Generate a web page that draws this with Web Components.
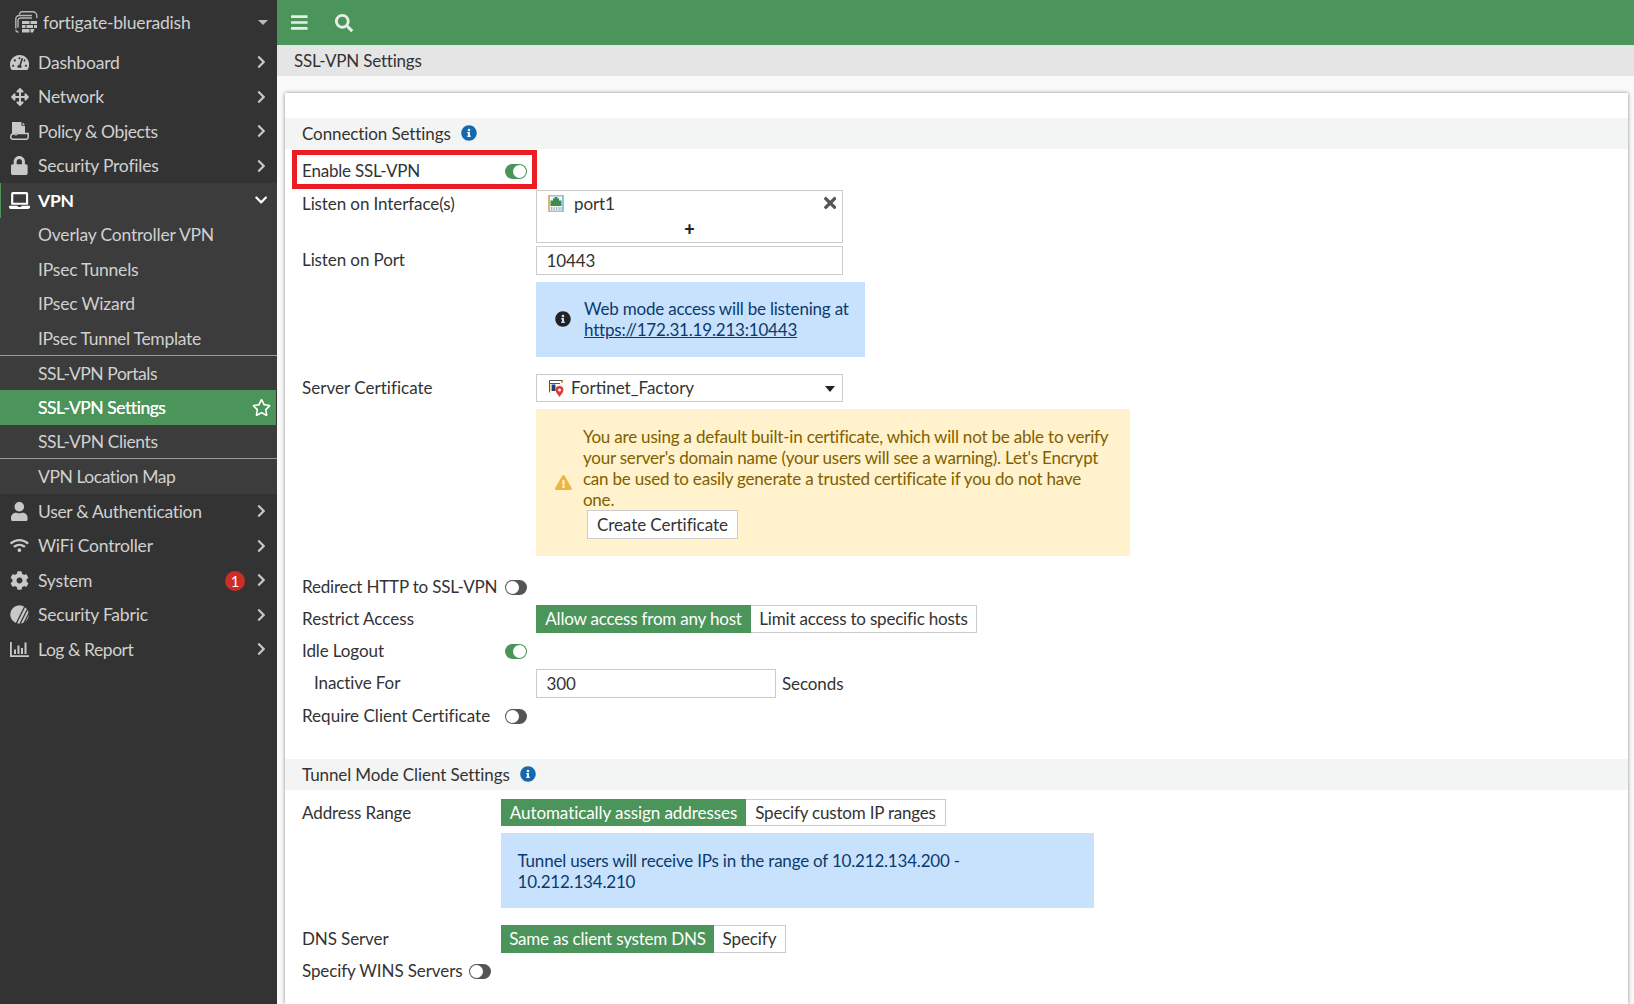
<!DOCTYPE html>
<html lang="en"><head><meta charset="utf-8"><title>SSL-VPN Settings</title>
<style>
html,body{margin:0;height:100%;overflow:hidden;background:#fafafa;font-family:Lato,"Liberation Sans",sans-serif;font-size:17px;color:#333}
</style></head><body>
<fg-app></fg-app>
<script>
const P={
bars:[448,512,"M16 132h416c8.837 0 16-7.163 16-16V76c0-8.837-7.163-16-16-16H16C7.163 60 0 67.163 0 76v40c0 8.837 7.163 16 16 16zm0 160h416c8.837 0 16-7.163 16-16v-40c0-8.837-7.163-16-16-16H16c-8.837 0-16 7.163-16 16v40c0 8.837 7.163 16 16 16zm0 160h416c8.837 0 16-7.163 16-16v-40c0-8.837-7.163-16-16-16H16c-8.837 0-16 7.163-16 16v40c0 8.837 7.163 16 16 16z"],
search:[512,512,"M505 442.7L405.3 343c-4.5-4.5-10.6-7-17-7H372c27.6-35.3 44-79.7 44-128C416 93.1 322.9 0 208 0S0 93.1 0 208s93.1 208 208 208c48.3 0 92.7-16.4 128-44v16.3c0 6.4 2.5 12.5 7 17l99.7 99.7c9.4 9.4 24.6 9.4 33.9 0l28.3-28.3c9.4-9.4 9.4-24.6.1-34zM208 336c-70.7 0-128-57.2-128-128 0-70.7 57.2-128 128-128 70.7 0 128 57.2 128 128 0 70.7-57.2 128-128 128z"],
info:[512,512,"M256 8C119.043 8 8 119.083 8 256c0 136.997 111.043 248 248 248s248-111.003 248-248C504 119.083 392.957 8 256 8zm0 110c23.196 0 42 18.804 42 42s-18.804 42-42 42-42-18.804-42-42 18.804-42 42-42zm56 254c0 6.627-5.373 12-12 12h-88c-6.627 0-12-5.373-12-12v-24c0-6.627 5.373-12 12-12h12v-64h-12c-6.627 0-12-5.373-12-12v-24c0-6.627 5.373-12 12-12h64c6.627 0 12 5.373 12 12v100h12c6.627 0 12 5.373 12 12v24z"],
warn:[576,512,"M569.517 440.013C587.975 472.007 564.806 512 527.94 512H48.054c-36.937 0-59.999-40.055-41.577-71.987L246.423 23.985c18.467-32.009 64.72-31.951 83.154 0l239.94 416.028zM288 354c-25.405 0-46 20.595-46 46s20.595 46 46 46 46-20.595 46-46-20.595-46-46-46zm-43.673-165.346l7.418 136c.347 6.364 5.609 11.346 11.982 11.346h48.546c6.373 0 11.635-4.982 11.982-11.346l7.418-136c.375-6.874-5.098-12.654-11.982-12.654h-63.383c-6.884 0-12.356 5.78-11.981 12.654z"],
times:[352,512,"M242.72 256l100.07-100.07c12.28-12.28 12.28-32.19 0-44.48l-22.24-22.24c-12.28-12.28-32.19-12.28-44.48 0L176 189.28 75.93 89.21c-12.28-12.28-32.19-12.28-44.48 0L9.21 111.45c-12.28 12.28-12.28 32.19 0 44.48L109.28 256 9.21 356.07c-12.28 12.28-12.28 32.19 0 44.48l22.24 22.24c12.28 12.28 32.2 12.28 44.48 0L176 322.72l100.07 100.07c12.28 12.28 32.2 12.28 44.48 0l22.24-22.24c12.28-12.28 12.28-32.19 0-44.48L242.72 256z"],
right:[320,512,"M285.476 272.971L91.132 467.314c-9.373 9.373-24.569 9.373-33.941 0l-22.667-22.667c-9.357-9.357-9.375-24.522-.04-33.901L188.505 256 34.484 101.255c-9.335-9.379-9.317-24.544.04-33.901l22.667-22.667c9.373-9.373 24.569-9.373 33.941 0L285.475 239.03c9.373 9.372 9.373 24.568.001 33.941z"],
down:[448,512,"M207.029 381.476L12.686 187.132c-9.373-9.373-9.373-24.569 0-33.941l22.667-22.667c9.357-9.357 24.522-9.375 33.901-.04L224 284.505l154.745-154.021c9.379-9.335 24.544-9.317 33.901.04l22.667 22.667c9.373 9.373 9.373 24.569 0 33.941L240.971 381.476c-9.373 9.372-24.569 9.372-33.942 0z"],
move:[512,512,"M352.201 425.775l-79.196 79.196c-9.373 9.373-24.568 9.373-33.941 0l-79.196-79.196c-15.119-15.119-4.411-40.971 16.971-40.97h51.162L228 284H127.196v51.162c0 21.382-25.851 32.09-40.971 16.971L7.029 272.937c-9.373-9.373-9.373-24.569 0-33.941L86.225 159.8c15.119-15.119 40.971-4.411 40.971 16.971V228H228V127.196h-51.23c-21.382 0-32.09-25.851-16.971-40.971l79.196-79.196c9.373-9.373 24.568-9.373 33.941 0l79.196 79.196c15.119 15.119 4.411 40.971-16.971 40.971h-51.162V228h100.804v-51.162c0-21.382 25.851-32.09 40.97-16.971l79.196 79.196c9.373 9.373 9.373 24.569 0 33.941L425.773 352.2c-15.119 15.119-40.971 4.411-40.97-16.971V284H284v100.804h51.23c21.382 0 32.09 25.851 16.971 40.971z"],
laptop:[640,512,"M624 416H381.54c-.74 19.81-14.71 32-32.74 32H288c-18.69 0-33.02-17.47-32.77-32H16c-8.8 0-16 7.2-16 16v16c0 35.2 28.8 64 64 64h512c35.2 0 64-28.8 64-64v-16c0-8.8-7.2-16-16-16zM576 48c0-26.4-21.6-48-48-48H112C85.6 0 64 21.6 64 48v336h512V48zm-64 272H128V64h384v256z"],
gauge:[576,512,"M288 32C128.94 32 0 160.94 0 320c0 52.8 14.25 102.26 39.06 144.8 5.61 9.62 16.3 15.2 27.44 15.2h443c11.14 0 21.83-5.58 27.44-15.2C561.75 422.26 576 372.8 576 320c0-159.06-128.94-288-288-288zm0 64c14.71 0 26.58 10.13 30.32 23.65-1.11 2.26-2.64 4.23-3.45 6.67l-9.22 27.67c-5.13 3.49-10.97 6.01-17.64 6.01-17.67 0-32-14.33-32-32S270.33 96 288 96zM96 384c-17.67 0-32-14.33-32-32s14.33-32 32-32 32 14.33 32 32-14.33 32-32 32zm48-160c-17.67 0-32-14.33-32-32s14.33-32 32-32 32 14.33 32 32-14.33 32-32 32zm246.77-72.41l-61.33 184C343.13 347.33 352 364.54 352 384c0 11.72-3.38 22.55-8.88 32H232.88c-5.5-9.45-8.88-20.28-8.88-32 0-33.94 26.5-61.43 59.9-63.59l61.34-184.01c4.17-12.56 17.73-19.45 30.36-15.17 12.57 4.19 19.35 17.79 15.17 30.36zm14.66 57.2l15.52-46.55c3.47-1.29 7.13-2.23 11.05-2.23 17.67 0 32 14.33 32 32s-14.33 32-32 32c-11.38-.01-20.89-6.28-26.57-15.22zM480 384c-17.67 0-32-14.33-32-32s14.33-32 32-32 32 14.33 32 32-14.33 32-32 32z"],
lock:[448,512,"M400 224h-24v-72C376 68.2 307.8 0 224 0S72 68.2 72 152v72H48c-26.5 0-48 21.5-48 48v192c0 26.5 21.5 48 48 48h352c26.5 0 48-21.5 48-48V272c0-26.5-21.5-48-48-48zm-104 0H152v-72c0-39.7 32.3-72 72-72s72 32.3 72 72v72z"],
user:[448,512,"M224 256c70.7 0 128-57.3 128-128S294.7 0 224 0 96 57.3 96 128s57.3 128 128 128zm89.6 32h-16.7c-22.2 10.2-46.9 16-72.9 16s-50.6-5.8-72.9-16h-16.7C60.2 288 0 348.2 0 422.4V464c0 26.5 21.5 48 48 48h352c26.5 0 48-21.5 48-48v-41.6c0-74.2-60.2-134.4-134.4-134.4z"],
wifi:[640,512,"M634.91 154.88C457.74-8.99 182.19-8.93 5.09 154.88c-6.66 6.16-6.79 16.59-.35 22.98l34.24 33.97c6.14 6.1 16.02 6.23 22.4.38 145.92-133.68 371.3-133.71 517.25 0 6.38 5.85 16.26 5.71 22.4-.38l34.24-33.97c6.43-6.39 6.3-16.82-.36-22.98zM320 352c-35.35 0-64 28.65-64 64s28.65 64 64 64 64-28.65 64-64-28.65-64-64-64zm202.67-83.59c-115.26-101.93-290.21-101.82-405.34 0-6.9 6.1-7.12 16.69-.57 23.15l34.44 33.99c6 5.92 15.66 6.32 22.05.8 83.95-72.57 209.74-72.41 293.49 0 6.39 5.52 16.05 5.13 22.05-.8l34.44-33.99c6.56-6.46 6.33-17.06-.56-23.15z"],
cog:[512,512,"M487.4 315.7l-42.6-24.6c4.3-23.2 4.3-47 0-70.2l42.6-24.6c4.9-2.8 7.1-8.6 5.5-14-11.1-35.6-30-67.8-54.7-94.6-3.8-4.1-10-5.1-14.8-2.3L380.8 110c-17.9-15.4-38.5-27.3-60.8-35.1V25.8c0-5.6-3.9-10.5-9.4-11.7-36.7-8.2-74.3-7.8-109.2 0-5.5 1.2-9.4 6.1-9.4 11.7V75c-22.2 7.9-42.8 19.8-60.8 35.1L88.7 85.5c-4.9-2.8-11-1.9-14.8 2.3-24.7 26.7-43.6 58.9-54.7 94.6-1.7 5.4.6 11.2 5.5 14L67.3 221c-4.3 23.2-4.3 47 0 70.2l-42.6 24.6c-4.9 2.8-7.1 8.6-5.5 14 11.1 35.6 30 67.8 54.7 94.6 3.8 4.1 10 5.1 14.8 2.3l42.6-24.6c17.9 15.4 38.5 27.3 60.8 35.1v49.2c0 5.6 3.9 10.5 9.4 11.7 36.7 8.2 74.3 7.8 109.2 0 5.5-1.2 9.4-6.1 9.4-11.7v-49.2c22.2-7.9 42.8-19.8 60.8-35.1l42.6 24.6c4.9 2.8 11 1.9 14.8-2.3 24.7-26.7 43.6-58.9 54.7-94.6 1.5-5.5-.7-11.3-5.6-14.1zM256 336c-44.1 0-80-35.9-80-80s35.9-80 80-80 80 35.9 80 80-35.9 80-80 80z"],
star:[576,512,"M528.1 171.5L382 150.2 316.7 17.8c-11.7-23.6-45.6-23.9-57.4 0L194 150.2 47.9 171.5c-26.2 3.8-36.7 36.1-17.7 54.6l105.7 103-25 145.5c-4.5 26.3 23.2 46 46.4 33.7L288 439.6l130.7 68.7c23.2 12.2 50.9-7.4 46.4-33.7l-25-145.5 105.7-103c19-18.5 8.5-50.8-17.7-54.6zM388.6 312.3l23.7 138.4L288 385.4l-124.3 65.3 23.7-138.4-100.6-98 139-20.2 62.2-126 62.2 126 139 20.2-100.6 98z"]
};
const RAW={
policy:`<svg viewBox="0 0 19 18" width="19" height="18"><path fill="currentColor" d="M2 0h9.500l-.2 3.500L15 4v7H7.500c-1.200 0-1.700.9-2.500 1.700H2z"/><path fill="currentColor" d="M12.500 .5L15 3h-2.500z"/><path fill="none" stroke="currentColor" stroke-width="1.500" d="M2.200 12c-1 .6-1.500 1.800-1.500 2.900 0 1.600 1 2.400 2.400 2.400h12.800c1.400 0 2.300-.9 2.300-2.300v-3.500H8c-1 0-1.500 1.400-2.800 1.400"/></svg>`,
fabric:`<svg viewBox="0 0 19 19" width="19" height="19"><circle cx="9.500" cy="9.500" r="9.300" fill="currentColor"/><g stroke="#333" stroke-width="1.300"><path d="M15 1L6 19M18 3L10 19M19.500 7L13.500 19"/></g></svg>`,
log:`<svg viewBox="0 0 19 17" width="19" height="17"><path fill="currentColor" d="M0 1h1.800v13.200H19V16H0z"/><path fill="currentColor" d="M4 8.500h2V13H4zM7.500 4.500h2V13h-2zM11 7h2v6h-2zM14.500 1.500h2V13h-2z"/></svg>`,
device:`<svg viewBox="0 0 23 22" width="23" height="22"><path fill="none" stroke="#b5b5b5" stroke-width="1.400" d="M4.500 3.500V3a2.300 2.300 0 0 1 2.300-2.300h11a4 4 0 0 1 4 4V7M.8 17.500V8A3.500 3.500 0 0 1 4.300 4.500H17M3.500 21H3a2.200 2.200 0 0 1-2.200-2.200M3 16.500V9.500a2.500 2.500 0 0 1 2.500-2.500H17"/><path fill="#c4c4c4" d="M7 10h7.500v3H7zM15.500 10H22v3h-6.500zM7 14h3.500v3H7zM11.500 14h6.500v3h-6.500zM19 14h3v3h-3zM7 18h7.500v3.500H7zM15.500 18h4l-1.500 3.500h-2.500z"/></svg>`,
port:`<svg viewBox="0 0 16 17" width="16" height="17"><rect width="16" height="17" fill="#f0b35a"/><rect x=".8" y=".8" width="14.400" height="15.400" fill="#8fc4dd"/><rect x="2" y="1.500" width="12" height="14" fill="#f5f7f5"/><path fill="#3f8a50" d="M2.500 5.500h2.500V3.500h1.500V2h3v1.500H11v2h2.500V11h-11z"/><path fill="#a8b0b4" d="M3 12h1.200v3H3zM5.500 12h1.200v3H5.500zM8 12h1.200v3H8zM10.500 12h1.200v3h-1.200zM12.500 12h1v3h-1z"/></svg>`,
cert:`<svg viewBox="0 0 15 17" width="15" height="17"><path fill="#fff" d="M0 0h15v6H9v7H0z"/><path fill="none" stroke="#555" d="M.5 12.500V.5h13v2"/><path fill="#e9a02f" d="M12 1h2v2h-2z"/><path fill="#555" d="M1 3h10v1H1z"/><path fill="#e8b23a" d="M1.500 4.500h1.500V11H1.500z"/><path fill="#1e3f78" d="M3 4.500h3.500V11H3z"/><path fill="#e23b2e" d="M10.500 6a4 4 0 0 1 4 4c0 2.200-2.500 4.500-4 7-1.500-2.500-4-4.800-4-7a4 4 0 0 1 4-4z"/><circle cx="10.500" cy="10" r="1.500" fill="#fff"/></svg>`
};
function svg(n,h){const [w,vh,d]=P[n];return `<svg viewBox="0 0 ${w} ${vh}" height="${h}" width="${h*w/vh}" style="display:block"><path fill="currentColor" d="${d}"/></svg>`}

class Base extends HTMLElement{
  constructor(){super();this.attachShadow({mode:'open'});}
  connectedCallback(){if(!this._r){this._r=1;this.shadowRoot.innerHTML=this.render();}}
  a(n,d=''){return this.hasAttribute(n)?this.getAttribute(n):d}
}
class FgIcon extends Base{render(){const n=this.a('name'),s=+this.a('size',16);
  return `<style>:host{display:inline-flex;align-items:center;justify-content:center;line-height:0;flex:none}svg{display:block}</style>${RAW[n]||svg(n,s)}`}}
customElements.define('fg-icon',FgIcon);

class FgNavItem extends Base{render(){
  const ic=this.a('icon'),st=this.hasAttribute('open');
  return `<style>
  :host{display:flex;align-items:center;box-sizing:border-box;height:34.55px;flex:none;padding-left:38px;color:#d0d0d0;position:relative;font-size:17.5px;letter-spacing:-.2px;white-space:nowrap}
  :host([open]){color:#fff;font-weight:700;border-left:1px solid #4b945a;padding-left:37px}
  :host([sub]){background:#3c3c3c}
  :host([open]){background:#3c3c3c}
  :host([sep]){border-bottom:1px solid #9a9a9a}
  :host([active]){background:#4b945a;color:#fff;margin-right:1px;text-shadow:0 0 .4px #fff}
  .i{position:absolute;left:10px;top:0;bottom:0;width:19px;display:flex;align-items:center;justify-content:center;color:#c8c8c8}
  :host([open]) .i{color:#fff;left:9px}
  .c{position:absolute;right:11px;top:0;bottom:0;display:flex;align-items:center;color:#c8c8c8}
  :host([open]) .c{color:#fff;right:10px}
  .star{position:absolute;right:4.5px;top:0;bottom:0;display:flex;align-items:center;color:#fff}
  .b{position:absolute;right:32px;top:7.5px;width:20px;height:20px;border-radius:50%;background:#cc2d27;color:#fff;font-size:15px;line-height:20px;text-align:center}
  </style>
  ${ic?`<span class="i"><fg-icon name="${ic}" size="${this.a('isize','17')}"></fg-icon></span>`:''}
  <slot></slot>
  ${this.hasAttribute('badge')?`<span class="b">${this.a('badge')}</span>`:''}
  ${this.hasAttribute('chev')?`<span class="c"><fg-icon name="${st?'down':'right'}" size="14"></fg-icon></span>`:''}
  ${this.hasAttribute('active')?`<span class="star"><fg-icon name="star" size="17"></fg-icon></span>`:''}`}}
customElements.define('fg-nav-item',FgNavItem);

class FgSidebar extends Base{render(){return `<style>
  :host{display:flex;flex-direction:column;width:277px;flex:none;background:#333;height:100%}
  header{height:44.9px;flex:none;display:flex;align-items:center;padding-left:15px;gap:5px;color:#d0d0d0;font-size:17.500px;position:relative;box-sizing:border-box;letter-spacing:-.2px}
  .car{position:absolute;right:9px;top:20px;width:0;height:0;border:5px solid transparent;border-top:5px solid #bbb;border-bottom:0}
  </style><header><fg-icon name="device"></fg-icon><span>fortigate-blueradish</span><i class="car"></i></header><slot></slot>`}}
customElements.define('fg-sidebar',FgSidebar);

class FgTopbar extends Base{render(){return `<style>
  :host{display:flex;align-items:center;height:45px;flex:none;background:#4b945a;color:#e6efe8;padding-left:14px;gap:27px;box-sizing:border-box}
  </style><fg-icon name="bars" size="19"></fg-icon><fg-icon name="search" size="18"></fg-icon>`}}
customElements.define('fg-topbar',FgTopbar);

class FgPageTitle extends Base{render(){return `<style>
  :host{display:flex;align-items:center;height:31px;flex:none;background:#e5e5e5;padding-left:17px;box-sizing:border-box;color:#333;letter-spacing:-.2px}
  </style><slot></slot>`}}
customElements.define('fg-page-title',FgPageTitle);

class FgCard extends Base{render(){return `<style>
  :host{display:flex;flex-direction:column;flex:1;margin:17px 6px 0 8px;background:#fff;box-shadow:0 0 4px rgba(0,0,0,.45);padding-top:25px;min-height:0;position:relative;overflow:visible}
  </style><slot></slot>`}}
customElements.define('fg-card',FgCard);

class FgSection extends Base{render(){return `<style>
  :host{display:flex;align-items:center;height:31px;flex:none;background:#f3f5f4;padding-left:17px;box-sizing:border-box;gap:10px;color:#333}
  fg-icon{color:#1668ae;position:relative;top:-1px}
  </style><slot></slot><fg-icon name="info" size="16"></fg-icon>`}}
customElements.define('fg-section',FgSection);

class FgRow extends Base{render(){return `<style>
  :host{display:grid;grid-template-columns:var(--label,234px) 1fr;padding-left:17px;margin-top:7px;line-height:22px;flex:none}
  .l{color:#333;white-space:nowrap;position:relative;display:flex;align-items:flex-start;letter-spacing:var(--ls,-.1px)}
  :host([indent]) .l{padding-left:12px}
  .c{display:flex;flex-direction:column;align-items:flex-start;gap:7px;min-width:0}
  :host([lp]) .l{padding-top:3px}
  </style><div class="l"><slot name="label"></slot></div><div class="c"><slot></slot></div>`}}
customElements.define('fg-row',FgRow);

class FgToggle extends Base{render(){return `<style>
  :host{display:block;position:absolute;top:4px;width:22px;height:15px;border-radius:8px;background:#555;left:var(--x,202.500px);box-sizing:border-box}
  i{position:absolute;left:1px;top:1px;width:13px;height:13px;border-radius:50%;background:#fff;box-sizing:border-box}
  :host([on]){background:#4b945a}
  :host([on]) i{left:auto;right:1px}
  </style><i></i>`}}
customElements.define('fg-toggle',FgToggle);

class FgInput extends Base{render(){return `<style>
  :host{display:flex;align-items:center;box-sizing:border-box;border:1px solid #ccc;height:var(--h,29px);width:var(--w,307px);padding-left:9.500px;background:#fff;color:#333;gap:7px;position:relative}
  </style><slot></slot>`}}
customElements.define('fg-input',FgInput);

class FgIfaceBox extends Base{render(){return `<style>
  :host{display:block;box-sizing:border-box;border:1px solid #ccc;height:53px;width:307px;position:relative;background:#fff;color:#333}
  .r{display:flex;align-items:center;height:25px;padding-left:11px;gap:10px}
  .x{position:absolute;right:6px;top:3px;color:#555}
  .p{text-align:center;font-weight:900;font-size:18px;line-height:18px;color:#222;margin-top:4px}
  </style><div class="r"><fg-icon name="port"></fg-icon><slot></slot></div><span class="x"><fg-icon name="times" size="18"></fg-icon></span><div class="p">+</div>`}}
customElements.define('fg-iface-box',FgIfaceBox);

class FgSelect extends Base{render(){return `<style>
  :host{display:flex;align-items:center;box-sizing:border-box;border:1px solid #ccc;height:28px;width:307px;padding-left:12px;gap:7px;position:relative;background:#fff;color:#333;letter-spacing:0}
  i{position:absolute;right:7px;top:11px;border:5.500px solid transparent;border-top:6px solid #222;border-bottom:0;width:0;height:0}
  </style><fg-icon name="cert"></fg-icon><slot></slot><i></i>`}}
customElements.define('fg-select',FgSelect);

class FgMessage extends Base{render(){const t=this.a('type','info');
  const warn=t==='warn',plain=this.hasAttribute('plain');
  return `<style>
  :host{display:flex;align-items:center;box-sizing:border-box;background:${warn?'#fff2cc':'#c8e2fd'};color:${warn?'#7f6000':'#0c3a6d'};width:var(--w,329px);min-height:var(--h,75px);padding:var(--p,0 14px ${plain?'0':'2px'} ${plain?'16.5px':'19px'});line-height:21px;gap:${warn?'11px':'13px'};letter-spacing:-.2px}
  fg-icon{color:${warn?'#f0b443':'#222'};position:relative}
  .t{min-width:0}
  ::slotted(a){color:#0c3a6d;text-decoration:underline}
  </style>${plain?'':`<fg-icon name="${warn?'warn':'info'}" size="${warn?15:16}"></fg-icon>`}<div class="t"><slot></slot></div>`}}
customElements.define('fg-message',FgMessage);

class FgSeg extends Base{render(){return `<style>
  :host{display:inline-flex;box-sizing:border-box;height:var(--h,28px);align-items:stretch;white-space:nowrap}
  ::slotted(span){display:flex;align-items:center;justify-content:center;box-sizing:border-box;border:1px solid #ccc;border-left:0;color:#333;background:#fff}
  ::slotted(span.on){background:#4b945a;color:#fff;border:0}
  </style><slot></slot>`}}
customElements.define('fg-seg',FgSeg);

class FgButton extends Base{render(){return `<style>
  :host{display:inline-flex;align-items:center;justify-content:center;box-sizing:border-box;height:29px;width:151px;border:1px solid #ccc;background:#fff;color:#333;white-space:nowrap;letter-spacing:-.05px}
  </style><slot></slot>`}}
customElements.define('fg-button',FgButton);

class FgHighlight extends Base{render(){return `<style>
  :host{position:absolute;left:7px;top:57px;width:245px;height:39px;box-sizing:border-box;border:5px solid #ed1c24;pointer-events:none}
  </style>`}}
customElements.define('fg-highlight',FgHighlight);

class FgApp extends Base{render(){return `<style>
  :host{display:flex;height:100vh;width:100%;letter-spacing:-.1px}
  main{flex:1;display:flex;flex-direction:column;min-width:0}
  </style>
  <fg-sidebar>
    <fg-nav-item icon="gauge" isize="17" chev>Dashboard</fg-nav-item>
    <fg-nav-item icon="move" isize="18" chev>Network</fg-nav-item>
    <fg-nav-item icon="policy" chev style="letter-spacing:-.4px">Policy &amp; Objects</fg-nav-item>
    <fg-nav-item icon="lock" isize="19" chev>Security Profiles</fg-nav-item>
    <fg-nav-item icon="laptop" isize="17" chev open>VPN</fg-nav-item>
    <fg-nav-item sub>Overlay Controller VPN</fg-nav-item>
    <fg-nav-item sub>IPsec Tunnels</fg-nav-item>
    <fg-nav-item sub>IPsec Wizard</fg-nav-item>
    <fg-nav-item sub sep style="letter-spacing:-.3px">IPsec Tunnel Template</fg-nav-item>
    <fg-nav-item sub style="letter-spacing:-.45px">SSL-VPN Portals</fg-nav-item>
    <fg-nav-item sub active style="letter-spacing:-.45px">SSL-VPN Settings</fg-nav-item>
    <fg-nav-item sub sep style="letter-spacing:-.4px">SSL-VPN Clients</fg-nav-item>
    <fg-nav-item sub style="letter-spacing:-.45px">VPN Location Map</fg-nav-item>
    <fg-nav-item icon="user" isize="19" chev style="letter-spacing:-.3px">User &amp; Authentication</fg-nav-item>
    <fg-nav-item icon="wifi" isize="15" chev>WiFi Controller</fg-nav-item>
    <fg-nav-item icon="cog" isize="19" chev badge="1">System</fg-nav-item>
    <fg-nav-item icon="fabric" chev>Security Fabric</fg-nav-item>
    <fg-nav-item icon="log" chev style="letter-spacing:-.45px">Log &amp; Report</fg-nav-item>
  </fg-sidebar>
  <main>
    <fg-topbar></fg-topbar>
    <fg-page-title>SSL-VPN Settings</fg-page-title>
    <fg-card>
      <fg-highlight></fg-highlight>
      <fg-section>Connection Settings</fg-section>
      <fg-row style="margin-top:11px;--ls:-.2px"><span slot="label">Enable SSL-VPN<fg-toggle on></fg-toggle></span></fg-row>
      <fg-row style="margin-top:8px" lp><span slot="label">Listen on Interface(s)</span><fg-iface-box>port1</fg-iface-box></fg-row>
      <fg-row style="margin-top:3px" lp><span slot="label">Listen on Port</span><fg-input>10443</fg-input>
        <fg-message>Web mode access will be listening at <a href="#">https://172.31.19.213:10443</a></fg-message></fg-row>
      <fg-row style="margin-top:17px;--ls:.03px" lp><span slot="label">Server Certificate</span><fg-select>Fortinet_Factory</fg-select>
        <fg-message type="warn" style="--w:594px;--h:147px;--p:13px 17px 14px 19px"><div>You are using a default built-in certificate, which will not be able to verify your server's domain name (your users will see a warning). Let's Encrypt can be used to easily generate a trusted certificate if you do not have one.<br><fg-button style="margin:0 0 0 4px">Create Certificate</fg-button></div></fg-message></fg-row>
      <fg-row style="margin-top:20px;--ls:-.18px"><span slot="label">Redirect HTTP to SSL-VPN<fg-toggle></fg-toggle></span></fg-row>
      <fg-row lp style="--ls:.03px"><span slot="label">Restrict Access</span><fg-seg><span class="on" style="width:215px;letter-spacing:-.2px">Allow access from any host</span><span style="width:226px;letter-spacing:-.2px">Limit access to specific hosts</span></fg-seg></fg-row>
      <fg-row><span slot="label">Idle Logout<fg-toggle on></fg-toggle></span></fg-row>
      <fg-row indent lp><span slot="label">Inactive For</span><div style="display:flex;align-items:center;gap:6px"><fg-input style="--w:240px">300</fg-input><span>Seconds</span></div></fg-row>
      <fg-row style="--ls:.02px"><span slot="label">Require Client Certificate<fg-toggle></fg-toggle></span></fg-row>
      <fg-section style="margin-top:32px">Tunnel Mode Client Settings</fg-section>
      <div style="--label:199px;display:contents">
      <fg-row style="margin-top:9px" lp><span slot="label">Address Range</span><fg-seg style="--h:27px"><span class="on" style="width:245px;letter-spacing:-.07px">Automatically assign addresses</span><span style="width:200px;letter-spacing:-.2px">Specify custom IP ranges</span></fg-seg>
        <fg-message plain style="--w:593px">Tunnel users will receive IPs in the range of 10.212.134.200 - 10.212.134.210</fg-message></fg-row>
      <fg-row style="margin-top:17px" lp><span slot="label">DNS Server</span><fg-seg><span class="on" style="width:213px;letter-spacing:-.2px">Same as client system DNS</span><span style="width:72px">Specify</span></fg-seg></fg-row>
      <fg-row><span slot="label" style="--x:167px">Specify WINS Servers<fg-toggle></fg-toggle></span></fg-row>
      </div>
    </fg-card>
  </main>`}}
customElements.define('fg-app',FgApp);
</script>
</body></html>
